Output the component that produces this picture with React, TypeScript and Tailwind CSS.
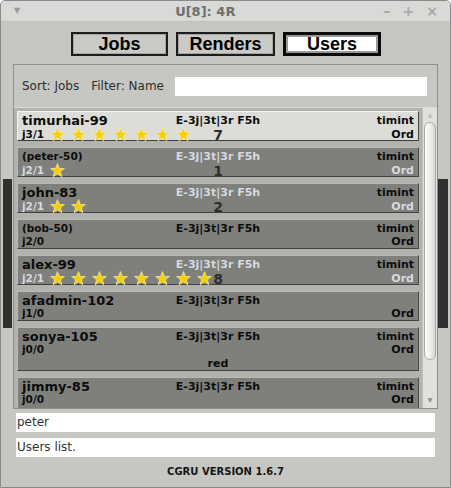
import React from "react";

type U = {
  name: string;
  small?: boolean;
  jobs: string;
  stars: number;
  num?: string;
  host: string;
  light?: boolean;
  dim?: boolean;
  dimE?: boolean;
  extra?: string;
  tall?: boolean;
};

const users: U[] = [
  { name: "timurhai-99", jobs: "j3/1", stars: 7, num: "7", host: "timint", light: true },
  { name: "(peter-50)", small: true, jobs: "j2/1", stars: 1, num: "1", host: "timint", dim: true, dimE: true },
  { name: "john-83", jobs: "j2/1", stars: 2, num: "2", host: "timint", dim: true, dimE: true },
  { name: "(bob-50)", small: true, jobs: "j2/0", stars: 0, host: "timint" },
  { name: "alex-99", jobs: "j2/1", stars: 8, num: "8", host: "timint", dim: true, dimE: true },
  { name: "afadmin-102", jobs: "j1/0", stars: 0, host: "" },
  { name: "sonya-105", jobs: "j0/0", stars: 0, host: "timint", extra: "red", tall: true },
  { name: "jimmy-85", jobs: "j0/0", stars: 0, host: "timint", extra: "ii", tall: true },
];

const Star = () => (
  <svg width="15" height="15" viewBox="-0.4 -0.4 14.8 14.8" className="shrink-0 block">
    <polygon
      points="7,0.2 8.9,5.0 13.8,5.0 9.9,8.2 11.3,13.2 7,10.3 2.7,13.2 4.1,8.2 0.2,5.0 5.1,5.0"
      fill="#f7d100"
      stroke="#f1eab8"
      strokeWidth="0.7"
      strokeLinejoin="round"
    />
  </svg>
);

const dj = { fontFamily: '"DejaVu Sans", sans-serif' } as const;

function Item({ u }: { u: U }) {
  const lightTxt = "text-[#d5dae0]";
  const darkTxt = "text-[#0c0c0c]";
  return (
    <div
      className={`shrink-0 flex flex-col border border-t-[#b9bab6] border-l-[#b9bab6] border-b-[#3f403e] border-r-[#4a4b48] pl-[4px] pr-[4px] pt-[1px] font-bold ${
        u.tall ? "h-[44px]" : "h-[30px]"
      } ${u.light ? "bg-[#dcddd9] border-t-[#f4f4f2] border-l-[#f4f4f2]" : "bg-[#7f807c]"}`}
    >
      <div className="grid grid-cols-[minmax(0,1fr)_auto_minmax(0,1fr)] h-[14px] items-start">
        <div
          className={`whitespace-nowrap ${darkTxt} ${
            u.small ? "text-[10.5px] leading-[14px]" : "text-[13px] leading-[15px]"
          }`}
        >
          {u.name}
        </div>
        <div className={`text-[11px] leading-[14px] whitespace-nowrap pt-[1px] ${u.dimE ? lightTxt : darkTxt}`}>
          E-3j|3t|3r F5h
        </div>
        <div className={`text-[11px] leading-[14px] text-right whitespace-nowrap pt-[1px] ${darkTxt}`}>{u.host}</div>
      </div>
      <div className="grid grid-cols-[minmax(0,1fr)_auto_minmax(0,1fr)] h-[13px] items-center">
        <div className="flex items-center whitespace-nowrap overflow-visible">
          <span className={`text-[10.5px] leading-[13px] ${u.dim ? lightTxt : darkTxt}`}>{u.jobs}</span>
          {u.stars > 0 && (
            <div className="flex items-center gap-[6px] ml-[6px]">
              {Array.from({ length: u.stars }).map((_, i) => (
                <Star key={i} />
              ))}
            </div>
          )}
        </div>
        <div className="text-[14px] leading-[13px] text-[#2e2e2e] pt-[1px]">{u.num ?? ""}</div>
        <div className={`text-[11px] leading-[13px] text-right ${u.dim ? lightTxt : darkTxt}`}>Ord</div>
      </div>
      {u.extra && (
        <div className="text-[11px] leading-[14px] text-center text-[#0c0c0c] pt-[1px]">{u.extra}</div>
      )}
    </div>
  );
}

export default function App() {
  return (
    <div
      className="w-[451px] h-[488px] bg-[#c6c7c3] border border-[#8a8b88] rounded-t-[5px] overflow-hidden flex flex-col"
      style={dj}
    >
      {/* title bar */}
      <div className="h-[21px] shrink-0 bg-[#d9d9d7] border-b border-[#c0c0be] flex items-center relative">
        <div className="w-[24px] pl-[13px] text-[8px] text-[#9a9a9a] leading-none">▼</div>
        <div className="flex-1 text-center text-[13px] font-bold text-[#6f6f6f] leading-none pl-[2px]">U[8]: 4R</div>
        <div className="flex items-center gap-[12px] pr-[12px] text-[#a8a8a8] text-[14px] font-bold leading-none">
          <span>–</span>
          <span>+</span>
          <span>×</span>
        </div>
      </div>

      <div className="flex-1 flex">
        {/* left gutter */}
        <div className="w-[12px] shrink-0 pt-[157px]">
          <div className="ml-[2px] w-[9px] h-[149px] bg-[#30312e]" />
        </div>

        {/* main column */}
        <div className="w-[425px] shrink-0 flex flex-col pt-[10px]">
          <div
            className="flex justify-center gap-[8px] h-[24px] ml-[1px]"
            style={{ fontFamily: '"Liberation Sans", Arial, sans-serif' }}
          >
            <div className="w-[97px] h-[24px] border-[2px] border-[#1c1c1c] bg-[#a5a6a3] p-[1px]">
              <div className="w-full h-full bg-[#c9cac6] flex items-center justify-center text-[18px] font-bold text-black leading-none">
                Jobs
              </div>
            </div>
            <div className="w-[99px] h-[24px] border-[2px] border-[#1c1c1c] bg-[#a5a6a3] p-[1px]">
              <div className="w-full h-full bg-[#c9cac6] flex items-center justify-center text-[18px] font-bold text-black leading-none">
                Renders
              </div>
            </div>
            <div className="w-[98px] h-[24px] border-[3px] border-[#0a0a0a] bg-[#9a9b98] p-[2px]">
              <div className="w-full h-full bg-white flex items-center justify-center text-[18px] font-bold text-black leading-none">
                Users
              </div>
            </div>
          </div>

          {/* panel */}
          <div className="mt-[8px] h-[345px] border border-[#8e8f8b] flex flex-col">
            <div className="h-[42px] shrink-0 flex items-center pl-[8px] pr-[10px] text-[12px] text-[#2c2c2c]">
              <span>Sort: Jobs</span>
              <span className="ml-[12px]">Filter: Name</span>
              <div className="ml-[11px] flex-1 h-[19px] bg-white" />
            </div>
            <div className="flex-1 flex border-t border-[#d8d9d5] bg-[#b2b3af] min-h-0">
              <div className="flex-1 min-w-0 overflow-hidden flex flex-col gap-[6px] pt-[3px] pl-[3px] pr-[3px]">
                {users.map((u) => (
                  <Item key={u.name} u={u} />
                ))}
              </div>
              <div className="w-[15px] shrink-0 bg-[#e0e0de] border-l border-[#bdbdbb] flex flex-col items-center relative">
                <div className="text-[6px] text-[#c0c0c0] leading-none mt-[4px]">▲</div>
                <div className="mt-[4px] w-[12px] h-[238px] rounded-full border border-[#a8a8a6] bg-gradient-to-r from-[#fafaf8] via-[#efefed] to-[#d8d8d6]" />
                <div className="flex-1" />
                <div className="text-[6px] text-[#8a8a8a] leading-none mb-[5px]">▼</div>
              </div>
            </div>
          </div>

          <div className="mt-[4px] ml-[3px] w-[419px] h-[19px] bg-white text-[12px] text-[#333] leading-[19px] pl-[1px]">
            peter
          </div>
          <div className="mt-[6px] ml-[3px] w-[419px] h-[19px] bg-white text-[12px] text-[#333] leading-[19px] pl-[1px]">
            Users list.
          </div>
          <div className="mt-[9px] text-center text-[10px] font-bold text-[#151515] leading-[12px]">
            CGRU VERSION 1.6.7
          </div>
        </div>

        {/* right gutter */}
        <div className="w-[12px] shrink-0 pt-[157px]">
          <div className="w-[10px] h-[149px] bg-[#30312e]" />
        </div>
      </div>
    </div>
  );
}
